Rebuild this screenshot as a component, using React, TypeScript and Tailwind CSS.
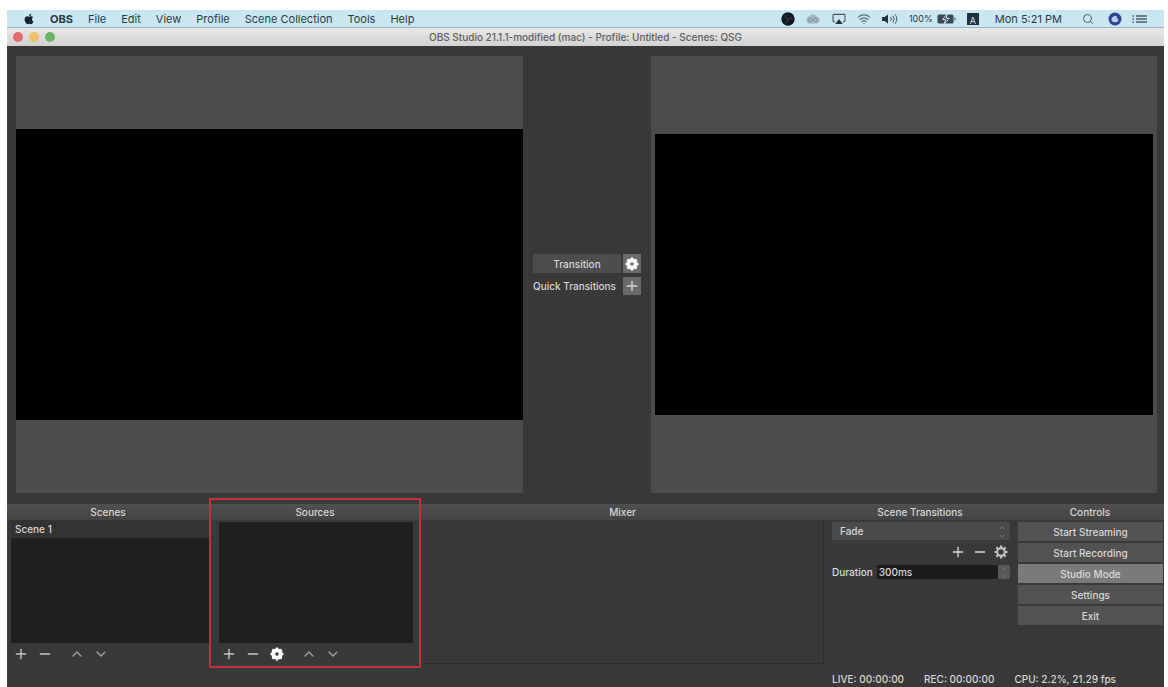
import React, { useState } from "react";
import { ChevronDown, ChevronUp, Minus, Plus, Search, Wifi } from "lucide-react";
import { FaApple } from "react-icons/fa";

const MENUS = ["File", "Edit", "View", "Profile", "Scene Collection", "Tools", "Help"];

const CONTROLS = ["Start Streaming", "Start Recording", "Studio Mode", "Settings", "Exit"];

const ObsIcon = () => (
  <svg viewBox="0 0 14 14" className="size-3.5">
    <circle cx="7" cy="7" r="6.7" fill="#14191e" />
    <g fill="none" stroke="#46525b" strokeWidth="0.8">
      <path d="M7 7C4.500 6.500 3.800 4.600 4.800 3" />
      <path d="M7 7C8.700 5.200 10.800 5.500 11.500 7" />
      <path d="M7 7C7.500 9.400 6 11 4.200 10.700" />
    </g>
  </svg>
);

const CloudIcon = () => (
  <svg viewBox="0 0 16 12" className="h-3 w-4">
    <path
      d="M4.500 10.500a3.500 3.500 0 0 1-.5-6.900A4.500 4.500 0 0 1 12 4a3.300 3.300 0 0 1 0 6.500z"
      fill="#a3b7c2"
    />
    <path
      d="M9.500 8.500 6.500 5.500a1.800 1.800 0 1 0 0 2.700L9 5.500a1.900 1.900 0 1 1 .5 3"
      fill="none"
      stroke="#7d929e"
    />
  </svg>
);

const AirplayIcon = () => (
  <svg viewBox="0 0 16 13" className="h-3 w-4">
    <path
      d="M4 9.500H2.500a1 1 0 0 1-1-1V2.500a1 1 0 0 1 1-1h11a1 1 0 0 1 1 1v6a1 1 0 0 1-1 1H12"
      fill="none"
      stroke="#44535d"
      strokeWidth="1.2"
    />
    <path d="M8 6.500 12 12H4z" fill="#27333b" />
  </svg>
);

const VolumeIcon = () => (
  <svg viewBox="0 0 18 12" className="h-3 w-4.5">
    <path d="M1 4h2.500L7 1.500v9L3.500 8H1z" fill="#27333b" />
    <g fill="none" stroke="#4c5b66">
      <path d="M9.500 4a3 3 0 0 1 0 4" />
      <path d="M11.800 2.700a5 5 0 0 1 0 6.600" />
      <path d="M14 1.300a7.500 7.500 0 0 1 0 9.400" />
    </g>
  </svg>
);

const BatteryIcon = () => (
  <svg viewBox="0 0 20 12" className="h-3 w-5">
    <rect x="0.500" y="1.500" width="16" height="9" rx="1.500" fill="#3a4852" />
    <path d="M17.500 4.200c1.500.4 1.500 3.200 0 3.600z" fill="#3a4852" />
    <path d="M10.200 1 5.500 6.600h3L7.300 11l5-5.800H9.200z" fill="#3a4852" stroke="#c8e2f0" />
  </svg>
);

const SiriIcon = () => (
  <svg viewBox="0 0 14 14" className="size-3.5">
    <circle cx="7" cy="7" r="6.500" fill="#2b4390" />
    <path d="M3.500 8.500C3 5.500 6 3.200 9 4.200 7.500 6 11 7 10.500 8.500 9 11 5 11 3.500 8.500z" fill="#b9cdf0" />
  </svg>
);

const ListIcon = () => (
  <svg viewBox="0 0 16 10" className="h-2.5 w-4" stroke="#4c5b66" strokeWidth="1.300">
    <path d="M0.500 2h1.500M0.500 5h1.500M0.500 8h1.500M4 2h11M4 5h11M4 8h11" />
  </svg>
);

const GearIcon = ({ thin, className }: { thin?: boolean; className: string }) => (
  <svg viewBox="0 0 14 14" className={className} fill="none" stroke="currentColor">
    <circle cx="7" cy="7" r="3.800" strokeWidth={thin ? 2 : 4} />
    <path
      d="M7 0.500v2M7 11.500v2M0.500 7h2M11.500 7h2M2.400 2.400l1.400 1.400M10.200 10.200l1.400 1.400M2.400 11.600l1.400-1.400M10.200 3.800l1.400-1.400"
      strokeWidth="2.200"
    />
  </svg>
);

const MenuBar = () => (
  <header className="flex h-[18px] items-center justify-between border-b border-[#9fb1ba] bg-[#cae6f3] px-4 text-[11px] leading-4 text-[#2c3a42]">
    <nav className="flex items-center gap-[15px]">
      <button aria-label="Apple menu">
        <FaApple className="size-3 text-[#17242c]" />
      </button>
      <button className="font-bold">OBS</button>
      {MENUS.map((menu) => (
        <button key={menu}>{menu}</button>
      ))}
    </nav>
    <div className="flex items-center gap-2.5">
      <ObsIcon />
      <CloudIcon />
      <AirplayIcon />
      <Wifi className="size-3.5 text-[#5d6e79]" />
      <VolumeIcon />
      <div className="flex items-center gap-1">
        <span className="text-[9px]">100%</span>
        <BatteryIcon />
      </div>
      <span className="grid size-3 place-items-center bg-[#22303a] text-[9px] text-[#cae6f3]">A</span>
      <span className="px-1.5">Mon 5:21 PM</span>
      <button aria-label="Search" className="px-1">
        <Search className="size-3 text-[#4c5b66]" />
      </button>
      <SiriIcon />
      <ListIcon />
    </div>
  </header>
);

const TitleBar = () => (
  <div className="grid h-[18px] grid-cols-[1fr_auto_1fr] items-center bg-linear-to-b from-[#e8e8e8] to-[#d2d2d2] px-1.5 text-[10px] font-medium text-[#606060]">
    <div className="flex gap-1.5">
      <button aria-label="Close" className="size-2.5 rounded-full bg-[#e0696a]" />
      <button aria-label="Minimize" className="size-2.5 rounded-full bg-[#f1bf6b]" />
      <button aria-label="Zoom" className="size-2.5 rounded-full bg-[#6cb465]" />
    </div>
    <h1>OBS Studio 21.1.1-modified (mac) - Profile: Untitled - Scenes: QSG</h1>
  </div>
);

const Previews = () => (
  <main className="grid flex-1 grid-cols-[507fr_128px_506fr] pt-2.5 pr-[7px] pb-[11px] pl-[9px]">
    <section aria-label="Preview" className="flex items-center bg-[#4c4c4c]">
      <div className="aspect-[507/291] w-full bg-black" />
    </section>
    <div className="flex flex-col justify-center gap-1 px-2.5">
      <div className="flex gap-0.5">
        <button className="h-[19px] flex-1 bg-[#4d4d4d]">Transition</button>
        <button aria-label="Transition settings" className="grid h-[19px] w-[18px] place-items-center bg-[#6a6a6a]">
          <GearIcon className="size-3.5 text-white" />
        </button>
      </div>
      <div className="flex items-center justify-between">
        <span className="whitespace-nowrap">Quick Transitions</span>
        <button aria-label="Add quick transition" className="grid h-[18px] w-[18px] place-items-center bg-[#6a6a6a]">
          <Plus className="size-4" />
        </button>
      </div>
    </div>
    <section aria-label="Program" className="flex items-center bg-[#4c4c4c] px-1">
      <div className="aspect-[497/281] w-full bg-black" />
    </section>
  </main>
);

const DockTitle = ({ children }: { children: React.ReactNode }) => (
  <h2 className="h-4 bg-linear-to-b from-[#505050] to-[#444] text-center leading-4">{children}</h2>
);

const ListTools = ({ name, settings }: { name: string; settings?: boolean }) => (
  <div className="flex h-[21px] items-center gap-2 text-[#c8c8c8]">
    <button aria-label={`Add ${name}`}>
      <Plus className="size-4" />
    </button>
    <button aria-label={`Remove ${name}`}>
      <Minus className="size-4" />
    </button>
    {settings && (
      <button aria-label={`${name} settings`} className="px-px">
        <GearIcon className="size-3.5 text-white" />
      </button>
    )}
    <button aria-label={`Move ${name} up`} className="pl-2">
      <ChevronUp className="size-4 text-[#a0a0a0]" />
    </button>
    <button aria-label={`Move ${name} down`}>
      <ChevronDown className="size-4 text-[#a0a0a0]" />
    </button>
  </div>
);

const TransitionsDock = () => {
  const [duration, setDuration] = useState("300ms");

  return (
    <section className="min-w-0">
      <DockTitle>Scene Transitions</DockTitle>
      <div className="pt-0.5 pr-1.5 pl-2">
        <div className="relative">
          <select aria-label="Transition" className="h-[18px] w-full appearance-none bg-[#4a4a4a] px-2">
            <option>Fade</option>
          </select>
          <div className="pointer-events-none absolute top-0.5 right-1 text-[#858585]">
            <ChevronUp className="size-2" />
            <ChevronDown className="size-2" />
          </div>
        </div>
        <div className="flex h-6 items-center justify-end gap-1.5 pr-0.5">
          <button aria-label="Add transition">
            <Plus className="size-4" />
          </button>
          <button aria-label="Remove transition">
            <Minus className="size-4" />
          </button>
          <button aria-label="Transition properties">
            <GearIcon thin className="size-3.5 text-[#c8c8c8]" />
          </button>
        </div>
        <div className="flex items-center">
          <label htmlFor="duration" className="pr-1">
            Duration
          </label>
          <input
            id="duration"
            value={duration}
            onChange={(e) => setDuration(e.target.value)}
            className="h-3.5 w-0 flex-1 bg-[#1c1c1c] px-0.5"
          />
          <div className="grid h-3.5 w-3 place-items-center bg-[#585858] text-[#999]">
            <ChevronUp className="size-1.5" />
            <ChevronDown className="size-1.5" />
          </div>
        </div>
      </div>
    </section>
  );
};

const Docks = () => {
  const [studioMode, setStudioMode] = useState(true);

  return (
    <div className="grid h-40 grid-cols-[202fr_212fr_403fr_192fr_148fr]">
      <section className="flex flex-col">
        <DockTitle>Scenes</DockTitle>
        <ul className="ml-1 flex-1 bg-[#1f1f1f]">
          <li className="h-[18px] bg-[#333] px-1 leading-[18px]">Scene 1</li>
        </ul>
        <div className="px-1.5">
          <ListTools name="scene" />
        </div>
      </section>

      <section className="relative flex flex-col">
        <DockTitle>Sources</DockTitle>
        <ul className="mr-2 ml-2.5 mt-0.5 flex-1 bg-[#1f1f1f]" />
        <div className="px-3">
          <ListTools name="source" settings />
        </div>
        {/* Highlight around the dock */}
        <div className="pointer-events-none absolute inset-x-0 -top-1.5 -bottom-1 border-2 border-[#c5303c]" />
      </section>

      <section className="flex flex-col">
        <DockTitle>Mixer</DockTitle>
        <div className="flex-1 border-r border-b border-[#2e2e2e]" />
      </section>

      <TransitionsDock />

      <section>
        <DockTitle>Controls</DockTitle>
        <div className="flex flex-col gap-0.5 pt-0.5 pr-px pl-0.5">
          {CONTROLS.map((label) => (
            <button
              key={label}
              onClick={() => label === "Studio Mode" && setStudioMode(!studioMode)}
              className={`h-[19px] ${label === "Studio Mode" && studioMode ? "bg-[#7a7a7a]" : "bg-[#525252]"}`}
            >
              {label}
            </button>
          ))}
        </div>
      </section>
    </div>
  );
};

const App: React.FC = () => (
  <div className="flex min-h-screen flex-col bg-white pt-2.5 pr-1 pl-[7px] font-['Inter',sans-serif]">
    <MenuBar />
    <TitleBar />
    <div className="flex flex-1 flex-col bg-[#393939] text-[10px] leading-4 font-medium text-[#d8d8d8]">
      <Previews />
      <Docks />
      <footer className="flex h-[23px] items-end justify-end gap-5 pr-12">
        <span>LIVE: 00:00:00</span>
        <span>REC: 00:00:00</span>
        <span>CPU: 2.2%, 21.29 fps</span>
      </footer>
    </div>
  </div>
);

export default App;
